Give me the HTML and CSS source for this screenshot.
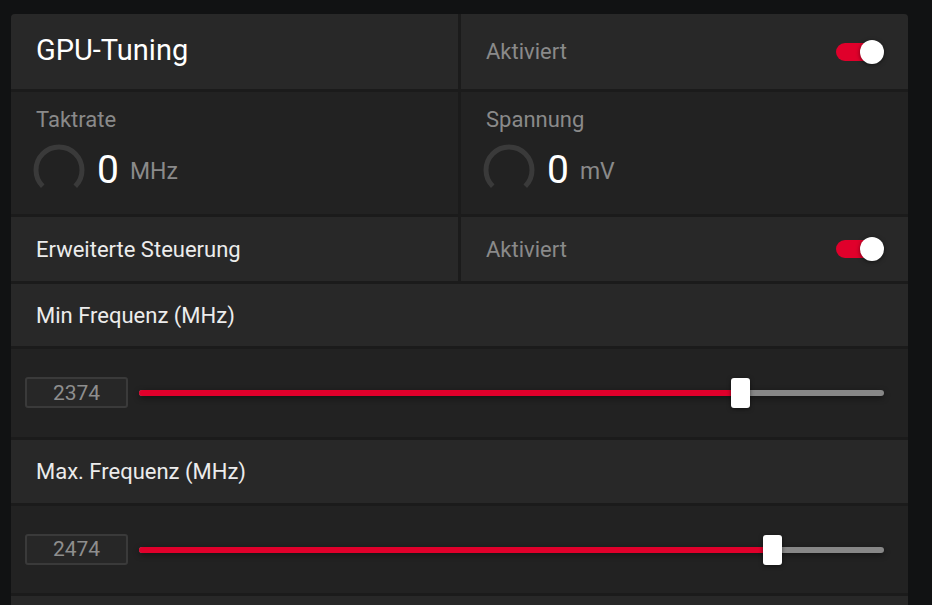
FILE: index.html
```html
<!DOCTYPE html>
<html lang="de">
<head>
<meta charset="utf-8">
<link rel="stylesheet" href="styles.css">
</head>
<body>
<div class="panel">
  <div class="split h-head">
    <div class="cell light"><span class="title">GPU-Tuning</span></div>
    <div class="cell light between">
      <span class="muted">Aktiviert</span>
      <span class="toggle"><span class="knob"></span></span>
    </div>
  </div>
  <div class="split h-metric">
    <div class="cell dark metric">
      <span class="muted">Taktrate</span>
      <div class="reading">
        <svg class="gauge" width="52" height="52" viewBox="0 0 52 52"><path d="M9.74 42.26 A23 23 0 1 1 42.26 42.26" fill="none" stroke="#3a3a3a" stroke-width="5"/></svg>
        <span class="big">0</span><span class="unit">MHz</span>
      </div>
    </div>
    <div class="cell dark metric">
      <span class="muted">Spannung</span>
      <div class="reading">
        <svg class="gauge" width="52" height="52" viewBox="0 0 52 52"><path d="M9.74 42.26 A23 23 0 1 1 42.26 42.26" fill="none" stroke="#3a3a3a" stroke-width="5"/></svg>
        <span class="big">0</span><span class="unit">mV</span>
      </div>
    </div>
  </div>
  <div class="split h-row">
    <div class="cell light"><span class="label">Erweiterte Steuerung</span></div>
    <div class="cell light between">
      <span class="muted">Aktiviert</span>
      <span class="toggle"><span class="knob"></span></span>
    </div>
  </div>
  <div class="cell light h-label"><span class="label">Min Frequenz (MHz)</span></div>
  <div class="cell dark h-slider slider-row">
    <div class="numbox">2374</div>
    <div class="track">
      <div class="fill" style="width: 80.7%"></div>
      <div class="thumb" style="left: 80.7%"></div>
    </div>
  </div>
  <div class="cell light h-label2"><span class="label">Max. Frequenz (MHz)</span></div>
  <div class="cell dark h-slider2 slider-row">
    <div class="numbox">2474</div>
    <div class="track">
      <div class="fill" style="width: 85%"></div>
      <div class="thumb" style="left: 85%"></div>
    </div>
  </div>
  <div class="cell light h-rest"></div>
</div>
</body>
</html>
```
FILE: styles.css
```css
html, body {
  margin: 0;
  padding: 0;
  background: #111213;
  height: 605px;
  overflow: hidden;
}
body {
  font-family: Roboto, "Liberation Sans", sans-serif;
  padding: 14px 0 0 11px;
  box-sizing: border-box;
}
.panel {
  width: 897px;
  background: #1b1b1b;
  border-radius: 4px 4px 0 0;
  overflow: hidden;
  display: flex;
  flex-direction: column;
  gap: 3px;
}
.split {
  display: grid;
  grid-template-columns: 447px 447px;
  gap: 3px;
}
.cell {
  display: flex;
  align-items: center;
  padding: 0 25px;
  box-sizing: border-box;
}
.light { background: #282828; }
.dark { background: #222222; }
.between { justify-content: space-between; padding-right: 24px; }
.h-head { height: 75px; }
.h-metric { height: 122px; }
.h-row { height: 64px; }
.h-label { height: 62px; }
.h-slider { height: 88px; }
.h-label2 { height: 63px; }
.h-slider2 { height: 87px; }
.h-rest { height: 20px; }

.title {
  color: #ffffff;
  font-size: 29px;
  font-weight: 400;
  margin-top: -3px;
}
.muted {
  color: #8a8a8a;
  font-size: 22px;
}
.label {
  color: #ececec;
  font-size: 22px;
}
.toggle {
  position: relative;
  width: 48px;
  height: 24px;
  display: block;
}
.toggle::before {
  content: "";
  position: absolute;
  left: 0;
  top: 3px;
  width: 44px;
  height: 18px;
  border-radius: 9px;
  background: #e0002b;
}
.knob {
  position: absolute;
  right: 0;
  top: 0;
  width: 24px;
  height: 24px;
  border-radius: 50%;
  background: #ffffff;
  box-shadow: 0 1px 4px rgba(0,0,0,0.5);
}
.metric {
  flex-direction: column;
  align-items: flex-start;
  justify-content: flex-start;
  padding-top: 15px;
}
.reading {
  display: flex;
  align-items: center;
  margin-top: 12px;
  margin-left: -3px;
}
.gauge { display: block; }
.big {
  color: #ffffff;
  font-size: 39px;
  margin-left: 12px;
  line-height: 1;
}
.unit {
  color: #8a8a8a;
  font-size: 23px;
  margin-left: 11px;
  margin-top: 2px;
}
.slider-row {
  padding: 0 24px 0 14px;
  gap: 11px;
}
.numbox {
  width: 103px;
  height: 31px;
  box-sizing: border-box;
  border: 2px solid #3a3a3a;
  border-radius: 3px;
  background: #272727;
  color: #8e8e8e;
  font-size: 21px;
  display: flex;
  align-items: center;
  justify-content: center;
  margin-top: -1px;
}
.track {
  position: relative;
  flex: 1;
  height: 6px;
  border-radius: 3px;
  background: #878787;
  box-shadow: 0 2px 6px rgba(0,0,0,0.45);
}
.fill {
  height: 100%;
  border-radius: 3px 0 0 3px;
  background: #e0002b;
}
.thumb {
  position: absolute;
  top: 50%;
  width: 19px;
  height: 30px;
  margin-left: -9px;
  margin-top: -15px;
  border-radius: 3px;
  background: #ffffff;
  box-shadow: 0 1px 4px rgba(0,0,0,0.5);
}
```
